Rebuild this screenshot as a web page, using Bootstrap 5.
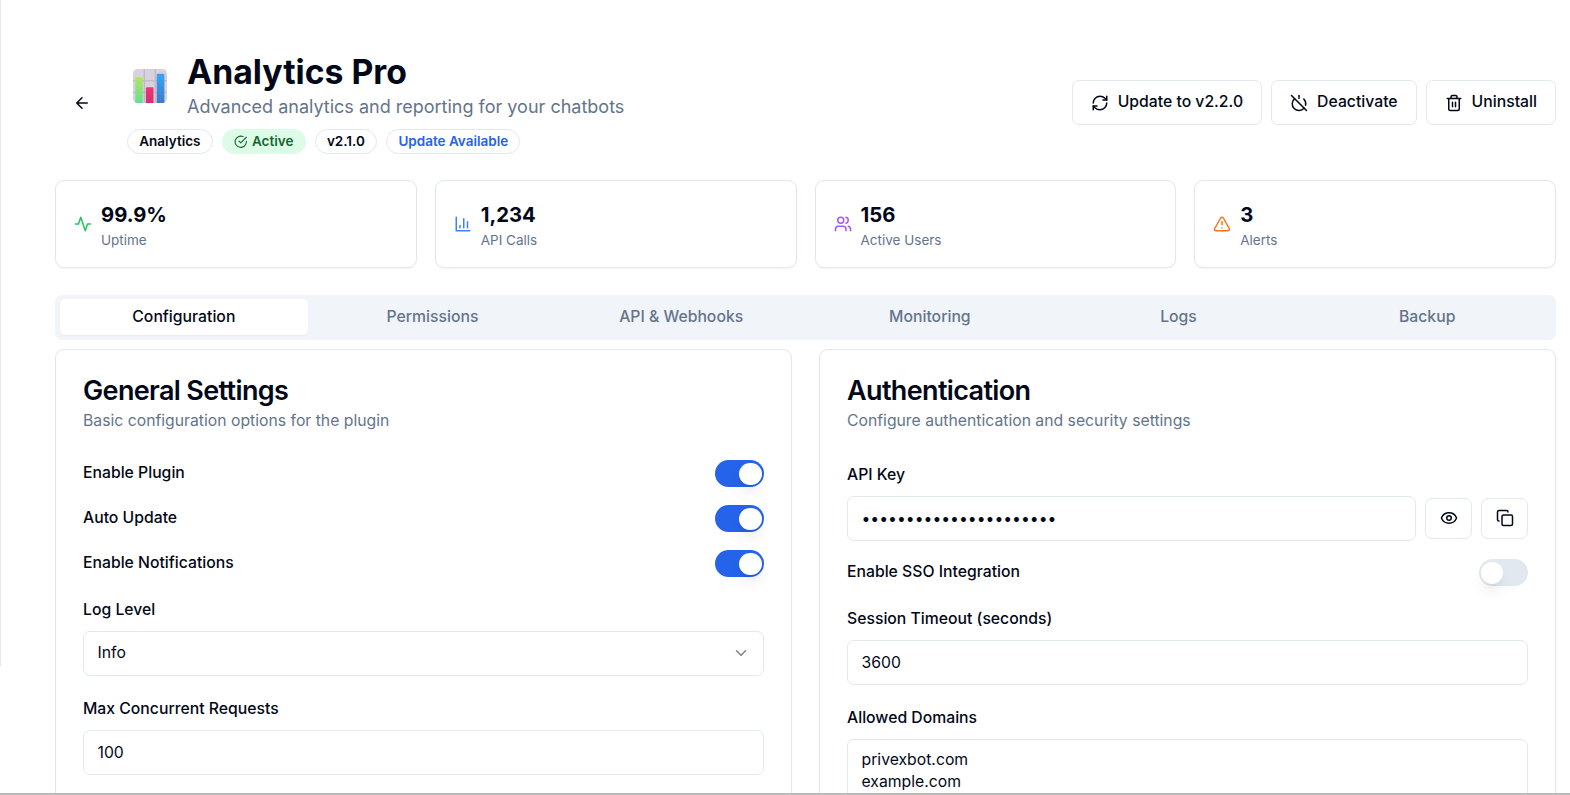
<!DOCTYPE html>
<html lang="en">
<head>
<meta charset="utf-8">
<meta name="viewport" content="width=device-width, initial-scale=1">
<title>Analytics Pro</title>
<link href="https://cdn.jsdelivr.net/npm/bootstrap@5.3.0/dist/css/bootstrap.min.css" rel="stylesheet">
<style>
  :root { --ink:#020817; --muted:#64748b; --line:#e2e8f0; --brand:#2563eb; }
  html { font-size:18px; }
  body { font-family:Inter,sans-serif; color:var(--ink); background:#fff; font-size:1rem; line-height:1.5; height:795px; overflow:hidden; border-bottom:2px solid #bababa; }
  .shell { height:793px; overflow:hidden; }
  .side-edge { width:1px; height:666px; background:var(--line); flex:none; }
  .page { padding:52px 14px 0 54px; min-width:0; }
  .ico { width:18px; height:18px; fill:none; stroke:currentColor; stroke-width:2; stroke-linecap:round; stroke-linejoin:round; flex:none; }
  .ico-sm { width:13.5px; height:13.5px; }
  .back-btn { width:54px; height:40.5px; padding:0; border:0; color:var(--ink); }
  .emoji { width:45px; margin-right:15px; }
  .emoji svg { display:block; width:34px; height:34px; margin-left:6px; }
  .plugin-title { font-size:33.75px; line-height:40px; font-weight:700; margin:0; }
  .plugin-desc { font-size:18px; line-height:27px; padding-top:1px; color:var(--muted); margin:0; }
  .pill { display:inline-flex; align-items:center; border:1px solid var(--line); border-radius:99px; padding:2.25px 11.25px; font-size:13.5px; line-height:18px; font-weight:600; }
  .pill-on { background:#dcfce7; border-color:transparent; color:#166534; }
  .pill-new { color:var(--brand); }
  .btn-line { display:inline-flex; align-items:center; justify-content:center; height:45px; padding:0 18px; gap:9px; border:1px solid var(--line); border-radius:7px; font-size:15.75px; font-weight:500; line-height:22.5px; color:var(--ink); background:#fff; }
  .btn-line span { margin-bottom:1.5px; }
  .btn-mini { height:41px; padding:0 13.5px 1px; flex:none; }
  .panel { border:1px solid var(--line); border-radius:9px; box-shadow:0 1px 2px rgba(0,0,0,.05); background:#fff; }
  .stat { padding:18px; height:88px; }
  .stat-row { margin-top:26.5px; --bs-gutter-x:18px; }
  .stat-num { font-size:20.25px; line-height:31px; padding-bottom:.5px; font-weight:700; }
  .stat-name { font-size:13.5px; line-height:18px; color:var(--muted); }
  .tabs { height:45px; margin-top:27px; padding:4px 4.5px; background:#f1f5f9; border-radius:7px; }
  .tabs .nav-link { padding:0; height:36px; line-height:35px; font-size:15.75px; font-weight:500; color:var(--muted); border-radius:5px; }
  .tabs .nav-link.active { background:#fff; color:var(--ink); box-shadow:0 1px 2px rgba(0,0,0,.05); }
  .panel-row { --bs-gutter-x:27px; margin-top:9px; }
  .panel-row .panel { height:520px; padding:27px; }
  .panel-title { font-size:27px; line-height:27px; font-weight:600; letter-spacing:-.024em; margin:0 0 6px; }
  .panel-desc { font-size:15.75px; line-height:22px; color:var(--muted); margin:0 0 28.25px; }
  .stack { display:flex; flex-direction:column; gap:18px; }
  .lbl { display:block; font-size:15.75px; font-weight:500; line-height:27px; padding-top:1px; margin:0 0 -1px; }
  .toggle-row { display:flex; justify-content:space-between; height:27px; }
  .toggle-row .lbl { line-height:25px; padding-top:0; }
  .field { margin-top:9px; height:45px; border:1px solid var(--line); border-radius:7px; padding:9px 13.5px; font-size:15.75px; line-height:22.5px; color:var(--ink); background-color:#fff; }
  textarea.form-control.field { height:90px; min-height:0; line-height:22px; resize:none; overflow:hidden; }
  .picker { display:flex; align-items:center; justify-content:space-between; text-align:left; width:100%; padding-top:8px; padding-bottom:10px; }
  .picker .ico { opacity:.5; }
  .toggle.form-check-input { width:49.5px; height:27px; margin:0; border:0; border-radius:99px; background:var(--line); flex:none; }
  .toggle::after { content:""; display:block; width:22.5px; height:22.5px; margin:2.25px; border-radius:50%; background:#fff; box-shadow:0 10px 15px -3px rgba(0,0,0,.1),0 4px 6px -4px rgba(0,0,0,.1); }
  .toggle.form-check-input:checked { background:var(--brand); }
  .toggle:checked::after { margin-left:24.75px; }
</style>
</head>
<body>
<div class="shell d-flex">
  <div class="side-edge"></div>
  <main class="page flex-grow-1">
    <header class="d-flex align-items-center justify-content-between">
      <div class="d-flex align-items-center gap-3">
        <button class="btn back-btn d-flex align-items-center justify-content-center" aria-label="Back"><svg class="ico" viewBox="0 0 24 24"><path d="m12 19-7-7 7-7M19 12H5"/></svg></button>
        <div>
          <div class="d-flex align-items-center">
            <div class="emoji">
              <svg viewBox="0 0 34 34" aria-hidden="true">
                <defs>
                  <linearGradient id="g1" x2="0" y2="1"><stop stop-color="#b1e55c"/><stop offset="1" stop-color="#5fe196"/></linearGradient>
                  <linearGradient id="g2" x2="0" y2="1"><stop stop-color="#ec3a72"/><stop offset="1" stop-color="#dc2a70"/></linearGradient>
                  <linearGradient id="g3" x2="0" y2="1"><stop stop-color="#37a5f5"/><stop offset="1" stop-color="#3d7bc9"/></linearGradient>
                  <clipPath id="tile"><rect width="34" height="34" rx="4.5"/></clipPath>
                </defs>
                <g clip-path="url(#tile)">
                  <rect width="34" height="34" fill="#d8d1de"/>
                  <path d="M0 11.700h34M0 23.200h34M11.300 0v34M22.200 0v34" stroke="#bbb4c3" stroke-width="1.100"/>
                  <path d="M2.300 34V9.500a1.200 1.200 0 0 1 1.200-1.200H8.500a1.200 1.200 0 0 1 1.200 1.200V34z" fill="url(#g1)"/>
                  <path d="M12.900 34V19.500a1.200 1.200 0 0 1 1.200-1.200H19.300a1.200 1.200 0 0 1 1.200 1.200V34z" fill="url(#g2)"/>
                  <path d="M23.700 34V6a1.200 1.200 0 0 1 1.200-1.200H30.200a1.200 1.200 0 0 1 1.200 1.200V34z" fill="url(#g3)"/>
                </g>
              </svg>
            </div>
            <div>
              <h1 class="plugin-title">Analytics Pro</h1>
              <p class="plugin-desc">Advanced analytics and reporting for your chatbots</p>
            </div>
          </div>
          <div class="d-flex align-items-center gap-2 mt-2">
            <span class="pill">Analytics</span>
            <span class="pill pill-on"><svg class="ico ico-sm me-1" viewBox="0 0 24 24"><path d="M22 11.080V12a10 10 0 1 1-5.930-9.140"/><path d="m9 11 3 3L22 4"/></svg>Active</span>
            <span class="pill">v2.1.0</span>
            <span class="pill pill-new">Update Available</span>
          </div>
        </div>
      </div>
      <div class="d-flex gap-2">
        <button class="btn btn-line"><svg class="ico" viewBox="0 0 24 24"><path d="M3 12a9 9 0 0 1 9-9 9.750 9.750 0 0 1 6.740 2.740L21 8"/><path d="M21 3v5h-5"/><path d="M21 12a9 9 0 0 1-9 9 9.750 9.750 0 0 1-6.740-2.740L3 16"/><path d="M8 16H3v5"/></svg><span>Update to v2.2.0</span></button>
        <button class="btn btn-line"><svg class="ico" viewBox="0 0 24 24"><path d="M18.360 6.640A9 9 0 0 1 20.770 15"/><path d="M6.160 6.160a9 9 0 1 0 12.680 12.680"/><path d="M12 2v4"/><path d="m2 2 20 20"/></svg><span>Deactivate</span></button>
        <button class="btn btn-line"><svg class="ico" viewBox="0 0 24 24"><path d="M3 6h18M19 6v14c0 1-1 2-2 2H7c-1 0-2-1-2-2V6M8 6V4c0-1 1-2 2-2h4c1 0 2 1 2 2v2M10 11v6M14 11v6"/></svg><span>Uninstall</span></button>
      </div>
    </header>

    <section class="row stat-row">
      <div class="col-3"><div class="card panel stat flex-row align-items-center gap-2">
        <svg class="ico" style="color:#22c55e" viewBox="0 0 24 24"><path d="M22 12h-4l-3 9L9 3l-3 9H2"/></svg>
        <div><div class="stat-num">99.9%</div><div class="stat-name">Uptime</div></div></div></div>
      <div class="col-3"><div class="card panel stat flex-row align-items-center gap-2">
        <svg class="ico" style="color:#3b82f6" viewBox="0 0 24 24"><path d="M3 3v18h18M18 17V9M13 17V5M8 17v-3"/></svg>
        <div><div class="stat-num">1,234</div><div class="stat-name">API Calls</div></div></div></div>
      <div class="col-3"><div class="card panel stat flex-row align-items-center gap-2">
        <svg class="ico" style="color:#a855f7" viewBox="0 0 24 24"><path d="M16 21v-2a4 4 0 0 0-4-4H6a4 4 0 0 0-4 4v2"/><circle cx="9" cy="7" r="4"/><path d="M22 21v-2a4 4 0 0 0-3-3.870M16 3.130a4 4 0 0 1 0 7.750"/></svg>
        <div><div class="stat-num">156</div><div class="stat-name">Active Users</div></div></div></div>
      <div class="col-3"><div class="card panel stat flex-row align-items-center gap-2">
        <svg class="ico" style="color:#f97316" viewBox="0 0 24 24"><path d="m21.730 18-8-14a2 2 0 0 0-3.480 0l-8 14A2 2 0 0 0 4 21h16a2 2 0 0 0 1.730-3M12 9v4M12 17h.01"/></svg>
        <div><div class="stat-num">3</div><div class="stat-name">Alerts</div></div></div></div>
    </section>

    <nav class="tabs nav nav-fill nav-justified flex-nowrap">
      <a class="nav-link active" href="#">Configuration</a>
      <a class="nav-link" href="#">Permissions</a>
      <a class="nav-link" href="#">API &amp; Webhooks</a>
      <a class="nav-link" href="#">Monitoring</a>
      <a class="nav-link" href="#">Logs</a>
      <a class="nav-link" href="#">Backup</a>
    </nav>

    <section class="row panel-row">
      <div class="col-6"><div class="card panel">
        <h2 class="panel-title">General Settings</h2>
        <p class="panel-desc">Basic configuration options for the plugin</p>
        <div class="stack">
          <div class="toggle-row"><label class="lbl" for="s1">Enable Plugin</label><input class="form-check-input toggle" type="checkbox" id="s1" checked></div>
          <div class="toggle-row"><label class="lbl" for="s2">Auto Update</label><input class="form-check-input toggle" type="checkbox" id="s2" checked></div>
          <div class="toggle-row"><label class="lbl" for="s3">Enable Notifications</label><input class="form-check-input toggle" type="checkbox" id="s3" checked></div>
          <div><span class="lbl">Log Level</span>
            <button class="field picker" type="button">Info<svg class="ico" viewBox="0 0 24 24"><path d="m6 9 6 6 6-6"/></svg></button></div>
          <div><label class="lbl" for="mx">Max Concurrent Requests</label><input class="form-control field" id="mx" value="100"></div>
        </div>
      </div></div>
      <div class="col-6"><div class="card panel">
        <h2 class="panel-title">Authentication</h2>
        <p class="panel-desc">Configure authentication and security settings</p>
        <div class="stack">
          <div><label class="lbl" for="key">API Key</label>
            <div class="d-flex align-items-center gap-2 mt-2">
              <input class="form-control field mt-0" type="password" id="key" value="sk_live_1234567890abcd">
              <button class="btn btn-line btn-mini" aria-label="Show"><svg class="ico" viewBox="0 0 24 24"><path d="M2.060 12.350a1 1 0 0 1 0-.7 10.750 10.750 0 0 1 19.880 0 1 1 0 0 1 0 .7 10.750 10.750 0 0 1-19.880 0"/><circle cx="12" cy="12" r="3"/></svg></button>
              <button class="btn btn-line btn-mini" aria-label="Copy"><svg class="ico" viewBox="0 0 24 24"><rect x="8" y="8" width="14" height="14" rx="2"/><path d="M4 16c-1.100 0-2-.9-2-2V4c0-1.100.9-2 2-2h10c1.100 0 2 .9 2 2"/></svg></button>
            </div></div>
          <div class="toggle-row"><label class="lbl" for="s4">Enable SSO Integration</label><input class="form-check-input toggle" type="checkbox" id="s4"></div>
          <div><label class="lbl" for="to">Session Timeout (seconds)</label><input class="form-control field" id="to" value="3600"></div>
          <div><label class="lbl" for="dom">Allowed Domains</label><textarea class="form-control field" id="dom">privexbot.com
example.com</textarea></div>
        </div>
      </div></div>
    </section>
  </main>
</div>
<script src="https://cdn.jsdelivr.net/npm/bootstrap@5.3.0/dist/js/bootstrap.bundle.min.js"></script>
</body>
</html>
